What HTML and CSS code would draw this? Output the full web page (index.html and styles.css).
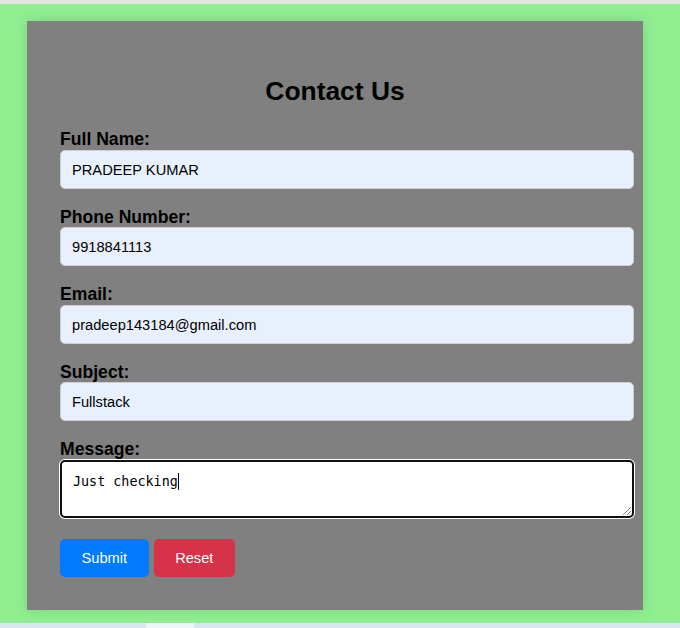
FILE: index.html
```html
<!DOCTYPE html>
<html lang="en">
<head>
<meta charset="utf-8">
<title>Contact Us</title>
<link rel="stylesheet" href="styles.css">
</head>
<body>
<div class="topbar"></div>
<div class="page">
  <form class="card">
    <h2 class="title">Contact Us</h2>
    <div class="field">
      <label class="label" for="name">Full Name:</label>
      <input class="input" id="name" type="text" value="PRADEEP KUMAR">
    </div>
    <div class="field">
      <label class="label" for="phone">Phone Number:</label>
      <input class="input" id="phone" type="text" value="9918841113">
    </div>
    <div class="field">
      <label class="label" for="email">Email:</label>
      <input class="input" id="email" type="text" value="pradeep143184@gmail.com">
    </div>
    <div class="field">
      <label class="label" for="subject">Subject:</label>
      <input class="input" id="subject" type="text" value="Fullstack">
    </div>
    <div class="field">
      <label class="label" for="message">Message:</label>
      <div class="textarea">Just checking<span class="caret"></span><span class="grip"></span></div>
    </div>
    <div class="actions">
      <button class="btn btn-submit" type="button">Submit</button>
      <button class="btn btn-reset" type="button">Reset</button>
    </div>
  </form>
</div>
<div class="bottombar"><span class="bottom-seg"></span></div>
</body>
</html>
```

FILE: styles.css
```css
* { box-sizing: border-box; }
html, body { margin: 0; padding: 0; }
body {
  font-family: "Liberation Sans", Arial, sans-serif;
  background: #dbe6ee;
  color: #000;
}
.topbar {
  height: 4px;
  background: #e3e3e3;
}
.page {
  background: #90ee90;
  padding: 17px 37px 13px 27px;
}
.card {
  display: block;
  background: #808080;
  padding: 33px;
  box-shadow: 0 0 12px rgba(0, 0, 0, 0.12);
}
.title {
  margin: 22px 0 21px;
  font-size: 26.4px;
  line-height: 30px;
  font-weight: bold;
  text-align: center;
}
.field {
  margin-top: 18px;
}
.title + .field {
  margin-top: 0;
  padding-top: 2px;
}
.label {
  display: block;
  font-size: 17.6px;
  line-height: 20px;
  font-weight: bold;
  margin-bottom: 0.5px;
}
.input {
  display: block;
  box-sizing: content-box;
  width: 100%;
  height: 17px;
  margin: 0;
  padding: 11px 11px 9px;
  border: 1px solid #cfcfcf;
  border-radius: 5px;
  background: #e8f0fe;
  font-family: "Liberation Sans", Arial, sans-serif;
  font-size: 14.67px;
  line-height: 17px;
  color: #000;
  outline: none;
}
.textarea {
  position: relative;
  width: 574px;
  height: 58px;
  margin-top: 1px;
  padding: 11px 10px 10px 11px;
  border: 2px solid #111;
  border-radius: 5px;
  box-shadow: 0 0 0 1px #fff;
  background: #fff;
  font-family: "DejaVu Sans Mono", "Liberation Mono", monospace;
  font-size: 13.4px;
  line-height: 17px;
  color: #000;
  white-space: pre;
}
.caret {
  display: inline-block;
  width: 1px;
  height: 17px;
  background: #000;
  vertical-align: top;
}
.grip {
  position: absolute;
  right: 1px;
  bottom: 1px;
  width: 8px;
  height: 8px;
  background: linear-gradient(135deg, transparent 45%, #888 45%, #888 52%, transparent 52%, transparent 70%, #888 70%, #888 78%, transparent 78%);
}
.actions {
  display: flex;
  gap: 5px;
  margin-top: 21px;
}
.btn {
  height: 38px;
  padding: 0 21.5px;
  border: none;
  border-radius: 5px;
  color: #fff;
  font-family: "Liberation Sans", Arial, sans-serif;
  font-size: 14.67px;
  line-height: 38px;
}
.btn-submit { background: #007bff; }
.btn-reset { background: #d6334a; }
.bottombar {
  height: 5px;
  background: #d9e6ef;
  padding-left: 146px;
}
.bottom-seg {
  display: block;
  width: 48px;
  height: 5px;
  background: #eef5fa;
}
```
